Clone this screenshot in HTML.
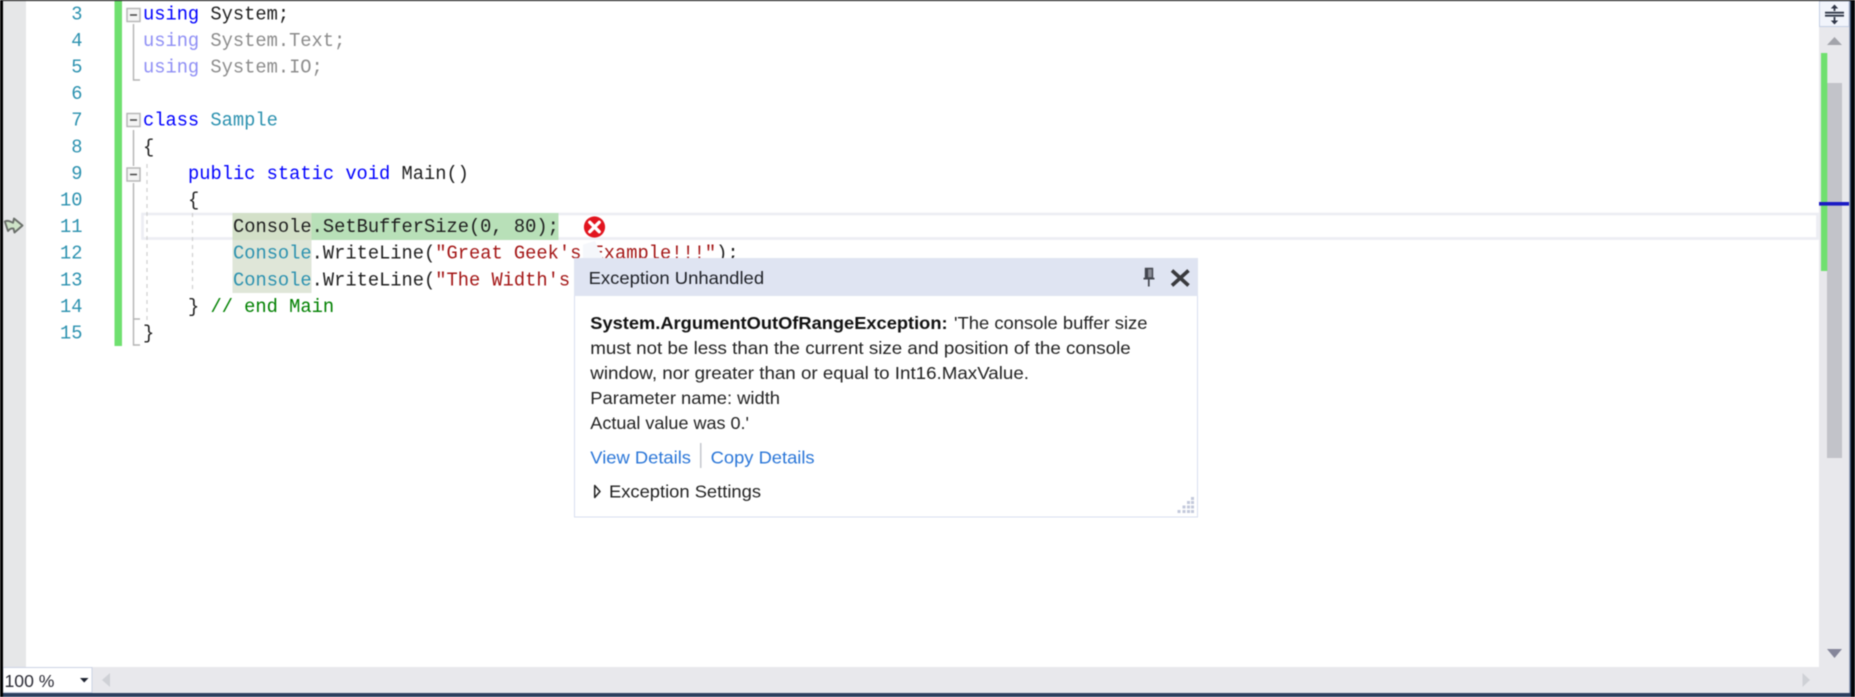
<!DOCTYPE html>
<html lang="en">
<head>
<meta charset="utf-8">
<title>Exception Unhandled</title>
<style>
html,body{margin:0;padding:0;background:#fff;width:1855px;height:697px;overflow:hidden}
svg{display:block;filter:blur(0.5px)}
.c{font-family:"Liberation Mono",monospace;font-size:19.8px;white-space:pre}
.u{font-family:"Liberation Sans",sans-serif;font-size:17.3px}
.n{fill:#2b91af;text-anchor:end}
.k{fill:#0000ff}
.t{fill:#2b91af}
.d{fill:#1e1e1e}
.s{fill:#a31515}
.g{fill:#008000}
</style>
</head>
<body>
<svg width="1855" height="697" viewBox="0 0 1855 697" xmlns="http://www.w3.org/2000/svg" xml:space="preserve">
<rect width="1855" height="697" fill="#fff"/>

<!-- gutter -->
<rect x="3" y="1" width="23" height="667" fill="#e6e7e8"/>

<!-- current-line box and highlights -->
<rect x="142.5" y="214" width="1675" height="24.5" fill="none" stroke="#ecedf3" stroke-width="2.6"/>
<rect x="232.5" y="213" width="79" height="27" fill="#d3e0c8"/>
<rect x="311.5" y="213" width="247" height="27" fill="#b8e0b8"/>
<rect x="232.5" y="240" width="79" height="53" fill="#dfe6d8"/>

<!-- change bar -->
<rect x="114.5" y="1" width="7.5" height="345" fill="#6fe06f"/>

<!-- outlining -->
<g fill="none" stroke="#b4b4b4" stroke-width="1.4">
<rect x="127" y="8.5" width="13" height="13" fill="#f4f4f4"/>
<path d="M133.5 24V80H140"/>
<rect x="127" y="113.5" width="13" height="13" fill="#f4f4f4"/>
<path d="M133.5 130V166M133.5 183V345H140M133.5 319H140"/>
<rect x="127" y="168" width="13" height="13" fill="#f4f4f4"/>
</g>
<g stroke="#444" stroke-width="1.6">
<path d="M130 15H137M130 120H137M130 174.5H137"/>
</g>
<g stroke="#cfcfcf" stroke-width="1.2" stroke-dasharray="4 4" fill="none">
<path d="M147 164V322M192.5 213V293"/>
</g>

<g transform="scale(.946 1)">
<!-- line numbers -->
<g class="c n">
<text x="87.2" y="19.3">3</text>
<text x="87.2" y="45.9">4</text>
<text x="87.2" y="72.5">5</text>
<text x="87.2" y="99.1">6</text>
<text x="87.2" y="125.7">7</text>
<text x="87.2" y="152.3">8</text>
<text x="87.2" y="178.9">9</text>
<text x="87.2" y="205.5">10</text>
<text x="87.2" y="232.1">11</text>
<text x="87.2" y="258.7">12</text>
<text x="87.2" y="285.3">13</text>
<text x="87.2" y="311.9">14</text>
<text x="87.2" y="338.5">15</text>
</g>

<!-- code -->
<g class="c">
<text x="151.16" y="19.3"><tspan class="k">using</tspan><tspan class="d"> System;</tspan></text>
<text x="151.16" y="45.9"><tspan fill="#8f8ff5">using</tspan><tspan fill="#8c8c8c"> System.Text;</tspan></text>
<text x="151.16" y="72.5"><tspan fill="#8f8ff5">using</tspan><tspan fill="#8c8c8c"> System.IO;</tspan></text>
<text x="151.16" y="125.7"><tspan class="k">class</tspan><tspan class="d"> </tspan><tspan class="t">Sample</tspan></text>
<text x="151.16" y="152.3" class="d">{</text>
<text x="198.73" y="178.9"><tspan class="k">public</tspan><tspan class="d"> </tspan><tspan class="k">static</tspan><tspan class="d"> </tspan><tspan class="k">void</tspan><tspan class="d"> Main()</tspan></text>
<text x="198.73" y="205.5" class="d">{</text>
<text x="246.3" y="232.1" class="d">Console.SetBufferSize(0, 80);</text>
<text x="246.3" y="258.7"><tspan class="t">Console</tspan><tspan class="d">.WriteLine(</tspan><tspan class="s">"Great Geek's Example!!!"</tspan><tspan class="d">);</tspan></text>
<text x="246.3" y="285.3"><tspan class="t">Console</tspan><tspan class="d">.WriteLine(</tspan><tspan class="s">"The Width's</tspan></text>
<text x="198.73" y="311.9"><tspan class="d">} </tspan><tspan class="g">// end Main</tspan></text>
<text x="151.16" y="338.5" class="d">}</text>
</g>
</g>

<!-- gutter arrow -->
<path d="M4.8 221.5C8 220 10.5 221.5 13 222.8L14 218.5L22.5 225.5L14.5 232.5L13.5 228.5C11 228 9.5 229 8 231C7 228 6 225 4.8 221.5Z" fill="#cfe4c8" stroke="#6a6f6a" stroke-width="1.9" stroke-linejoin="round"/>

<!-- error glyph -->
<circle cx="594.5" cy="227" r="10.6" fill="#e2151f"/>
<path d="M589.8 222.3L599.2 231.7M599.2 222.3L589.8 231.7" stroke="#fff" stroke-width="3.4" stroke-linecap="round"/>

<!-- popup pointer -->
<path d="M583 244.5L595 241L603 258.5H583Z" fill="#f5f7fb"/>

<!-- popup -->
<rect x="574.5" y="258.5" width="623" height="258.5" fill="#fff" stroke="#d8deef" stroke-width="1"/>
<rect x="574" y="258" width="624" height="38" fill="#dfe4f2"/>
<text class="u" x="588.6" y="284" textLength="175.5" lengthAdjust="spacingAndGlyphs" fill="#1e2026">Exception Unhandled</text>

<!-- pin -->
<path d="M1145.5 268.5H1152.5V278H1145.5Z" fill="#8a8d97" stroke="#43464f" stroke-width="1.4"/>
<path d="M1147 268.5V278" stroke="#43464f" stroke-width="2.2"/>
<path d="M1143.5 278.6H1154.5M1148.8 279V286.5" stroke="#43464f" stroke-width="1.7"/>
<!-- close -->
<path d="M1172 270.5L1188.5 285.5M1188.5 270.5L1172 285.5" stroke="#3a3a3e" stroke-width="3.6"/>

<g class="u" fill="#222">
<text x="590.3" y="329" textLength="357.3" lengthAdjust="spacingAndGlyphs" font-weight="700" fill="#111">System.ArgumentOutOfRangeException:</text>
<text x="954" y="329" textLength="193.5" lengthAdjust="spacingAndGlyphs">'The console buffer size</text>
<text x="590.3" y="354" textLength="540.4" lengthAdjust="spacingAndGlyphs">must not be less than the current size and position of the console</text>
<text x="590.3" y="379" textLength="438.7" lengthAdjust="spacingAndGlyphs">window, nor greater than or equal to Int16.MaxValue.</text>
<text x="590.3" y="404" textLength="189.7" lengthAdjust="spacingAndGlyphs">Parameter name: width</text>
<text x="590.3" y="429" textLength="158.7" lengthAdjust="spacingAndGlyphs">Actual value was 0.'</text>
<text x="590.3" y="463.5" textLength="100.7" lengthAdjust="spacingAndGlyphs" fill="#2a76d8">View Details</text>
<text x="710.7" y="463.5" textLength="103.9" lengthAdjust="spacingAndGlyphs" fill="#2a76d8">Copy Details</text>
<text x="609" y="497.5" textLength="152" lengthAdjust="spacingAndGlyphs">Exception Settings</text>
</g>
<rect x="700" y="443" width="1.5" height="25" fill="#c4c7cd"/>
<path d="M594.7 485.5L600 491.5L594.7 497.5Z" fill="#fff" stroke="#222" stroke-width="1.5" stroke-linejoin="round"/>

<!-- resize grip -->
<g fill="#c3c9db">
<rect x="1177.5" y="510" width="3" height="3"/><rect x="1182.5" y="510" width="3" height="3"/><rect x="1187" y="510" width="3" height="3"/><rect x="1191" y="510" width="3" height="3"/>
<rect x="1182.5" y="505.5" width="3" height="3"/><rect x="1187" y="505.5" width="3" height="3"/><rect x="1191" y="505.5" width="3" height="3"/>
<rect x="1187" y="501" width="3" height="3"/><rect x="1191" y="501" width="3" height="3"/>
<rect x="1191" y="497" width="3" height="3"/>
</g>

<!-- vertical scrollbar -->
<rect x="1819" y="1" width="30" height="692" fill="#e8e8ec"/>
<rect x="1819.5" y="1" width="29.5" height="25.5" fill="#f1f4fb" stroke="#c3cee4" stroke-width="1"/>
<path d="M1825 12.7H1844M1825 15.7H1844" stroke="#2f3647" stroke-width="1.8"/>
<path d="M1834.5 11V6M1834.5 17V23" stroke="#2f3647" stroke-width="1.8"/>
<path d="M1834.5 4.5L1838.2 8.5H1830.8ZM1834.5 24.5L1838.2 20.5H1830.8Z" fill="#2f3647"/>
<path d="M1834.5 37L1842 45H1827Z" fill="#a3a4ab"/>
<rect x="1827" y="83" width="15" height="375" fill="#c2c3c9"/>
<rect x="1821" y="53" width="6.3" height="218" fill="#6fe06f"/>
<rect x="1819" y="202" width="30" height="3.6" fill="#1a1ac4"/>
<path d="M1827 649H1842L1834.5 658Z" fill="#85869a"/>

<!-- horizontal scrollbar -->
<rect x="3" y="667" width="1816" height="26" fill="#e8e8ec"/>
<rect x="3" y="667.5" width="89" height="25" fill="#fff" stroke="#ccd3e4" stroke-width="1"/>
<text class="u" x="4.5" y="687" textLength="50" lengthAdjust="spacingAndGlyphs" fill="#2c2c36">100 %</text>
<path d="M80 678H88.5L84.2 682.5Z" fill="#1e2330"/>
<path d="M110 673V687L102 680Z" fill="#cfd1d6"/>
<path d="M1802.5 673V687L1810 680Z" fill="#cfd1d6"/>

<!-- window frame -->
<rect x="1849" y="0" width="1" height="693" fill="#a5adc4"/>
<rect x="1850" y="0" width="1.5" height="697" fill="#2e4568"/>
<rect x="3" y="693" width="1848" height="4" fill="#2c3f5e"/>
<rect x="0" y="0" width="3" height="697" fill="#000"/>
<rect x="1851" y="0" width="4" height="697" fill="#03060a"/>
<rect x="0" y="0" width="1855" height="1" fill="#000"/>
</svg>
</body>
</html>
